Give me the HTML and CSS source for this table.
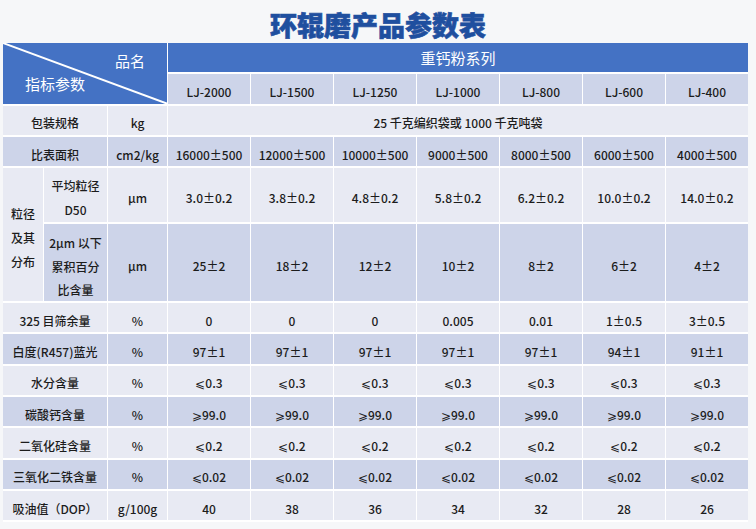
FILE: index.html
```html
<!DOCTYPE html>
<html lang="zh-CN">
<head>
<meta charset="utf-8">
<title>环辊磨产品参数表</title>
<link rel="stylesheet" href="styles.css">
</head>
<body>
<h1 class="title">环辊磨产品参数表</h1>
<div class="sheet">
  <div class="corner">
    <svg class="diag" viewBox="0 0 100 100" preserveAspectRatio="none"><line x1="0" y1="0" x2="100" y2="100"/></svg>
    <span class="corner-top">品名</span>
    <span class="corner-bottom">指标参数</span>
  </div>
  <div class="series">重钙粉系列</div>

  <div class="c dk">LJ-2000</div><div class="c dk">LJ-1500</div><div class="c dk">LJ-1250</div><div class="c dk">LJ-1000</div><div class="c dk">LJ-800</div><div class="c dk">LJ-600</div><div class="c dk">LJ-400</div>

  <div class="c lt w2">包装规格</div><div class="c lt">kg</div><div class="c lt w7">25 千克编织袋或 1000 千克吨袋</div>

  <div class="c dk w2">比表面积</div><div class="c dk">cm2/kg</div>
  <div class="c dk">16000±500</div><div class="c dk">12000±500</div><div class="c dk">10000±500</div><div class="c dk">9000±500</div><div class="c dk">8000±500</div><div class="c dk">6000±500</div><div class="c dk">4000±500</div>

  <div class="c lt h2 group">粒径<br>及其<br>分布</div>
  <div class="c lt">平均粒径<br>D50</div><div class="c lt">µm</div>
  <div class="c lt">3.0±0.2</div><div class="c lt">3.8±0.2</div><div class="c lt">4.8±0.2</div><div class="c lt">5.8±0.2</div><div class="c lt">6.2±0.2</div><div class="c lt">10.0±0.2</div><div class="c lt">14.0±0.2</div>

  <div class="c dk tight">2µm 以下<br>累积百分<br>比含量</div><div class="c dk">µm</div>
  <div class="c dk">25±2</div><div class="c dk">18±2</div><div class="c dk">12±2</div><div class="c dk">10±2</div><div class="c dk">8±2</div><div class="c dk">6±2</div><div class="c dk">4±2</div>

  <div class="c lt w2">325 目筛余量</div><div class="c lt">%</div>
  <div class="c lt">0</div><div class="c lt">0</div><div class="c lt">0</div><div class="c lt">0.005</div><div class="c lt">0.01</div><div class="c lt">1±0.5</div><div class="c lt">3±0.5</div>

  <div class="c dk w2">白度(R457)蓝光</div><div class="c dk">%</div>
  <div class="c dk">97±1</div><div class="c dk">97±1</div><div class="c dk">97±1</div><div class="c dk">97±1</div><div class="c dk">97±1</div><div class="c dk">94±1</div><div class="c dk">91±1</div>

  <div class="c lt w2">水分含量</div><div class="c lt">%</div>
  <div class="c lt">⩽0.3</div><div class="c lt">⩽0.3</div><div class="c lt">⩽0.3</div><div class="c lt">⩽0.3</div><div class="c lt">⩽0.3</div><div class="c lt">⩽0.3</div><div class="c lt">⩽0.3</div>

  <div class="c dk w2">碳酸钙含量</div><div class="c dk">%</div>
  <div class="c dk">⩾99.0</div><div class="c dk">⩾99.0</div><div class="c dk">⩾99.0</div><div class="c dk">⩾99.0</div><div class="c dk">⩾99.0</div><div class="c dk">⩾99.0</div><div class="c dk">⩾99.0</div>

  <div class="c lt w2">二氧化硅含量</div><div class="c lt">%</div>
  <div class="c lt">⩽0.2</div><div class="c lt">⩽0.2</div><div class="c lt">⩽0.2</div><div class="c lt">⩽0.2</div><div class="c lt">⩽0.2</div><div class="c lt">⩽0.2</div><div class="c lt">⩽0.2</div>

  <div class="c dk w2">三氧化二铁含量</div><div class="c dk">%</div>
  <div class="c dk">⩽0.02</div><div class="c dk">⩽0.02</div><div class="c dk">⩽0.02</div><div class="c dk">⩽0.02</div><div class="c dk">⩽0.02</div><div class="c dk">⩽0.02</div><div class="c dk">⩽0.02</div>

  <div class="c lt w2">吸油值（DOP）</div><div class="c lt">g/100g</div>
  <div class="c lt">40</div><div class="c lt">38</div><div class="c lt">36</div><div class="c lt">34</div><div class="c lt">32</div><div class="c lt">28</div><div class="c lt">26</div>
</div>
</body>
</html>
```

FILE: styles.css
```css
* {
  box-sizing: border-box;
  margin: 0;
  padding: 0;
}

html,
body {
  background: #f6f7f9;
}

body {
  width: 756px;
  height: 529px;
  overflow: hidden;
  font-family: "Noto Sans CJK SC", "Noto Sans", sans-serif;
  color: #1c1c1c;
}

.title {
  height: 43px;
  padding-top: 9px;
  font-size: 27px;
  line-height: 32px;
  font-weight: 900;
  color: #1f4f9f;
  text-align: center;
  -webkit-text-stroke: 0.6px #1f4f9f;
}

.sheet {
  display: grid;
  width: 745px;
  margin-left: 3px;
  grid-template-columns: 40px 63px 59px repeat(7, 82px);
  grid-template-rows: 29.3px 29.3px 29.3px 29.3px 54px 77px repeat(7, 29.3px);
  gap: 2px 1px;
  background: #ffffff;
  border-bottom: 2px solid #ffffff;
}

.c {
  display: flex;
  align-items: center;
  justify-content: center;
  padding-top: 6px;
  text-align: center;
  font-size: 12px;
  line-height: 24px;
  font-weight: 500;
}

.tight {
  line-height: 23.5px;
  padding-top: 8px;
}

.lt {
  background: #e8eaf3;
}

.dk {
  background: #cdd4e9;
}

.w2 {
  grid-column: span 2;
}

.w7 {
  grid-column: span 7;
}

.h2 {
  grid-row: span 2;
}

.group {
  padding-top: 7px;
}

.corner {
  position: relative;
  grid-column: span 3;
  grid-row: span 2;
  display: flex;
  flex-direction: column;
  gap: 3px;
  padding: 8px 22px 0;
  background: #4472c4;
  color: #ffffff;
  font-size: 15px;
  line-height: 20px;
}

.corner span {
  position: relative;
}

.corner-top {
  align-self: flex-end;
}

.corner-bottom {
  align-self: flex-start;
}

.diag {
  position: absolute;
  inset: 0;
  width: 100%;
  height: 100%;
}

.diag line {
  stroke: #ffffff;
  stroke-width: 2;
  vector-effect: non-scaling-stroke;
}

.series {
  grid-column: span 7;
  display: flex;
  align-items: center;
  justify-content: center;
  background: #4472c4;
  color: #ffffff;
  font-size: 15px;
}
```
